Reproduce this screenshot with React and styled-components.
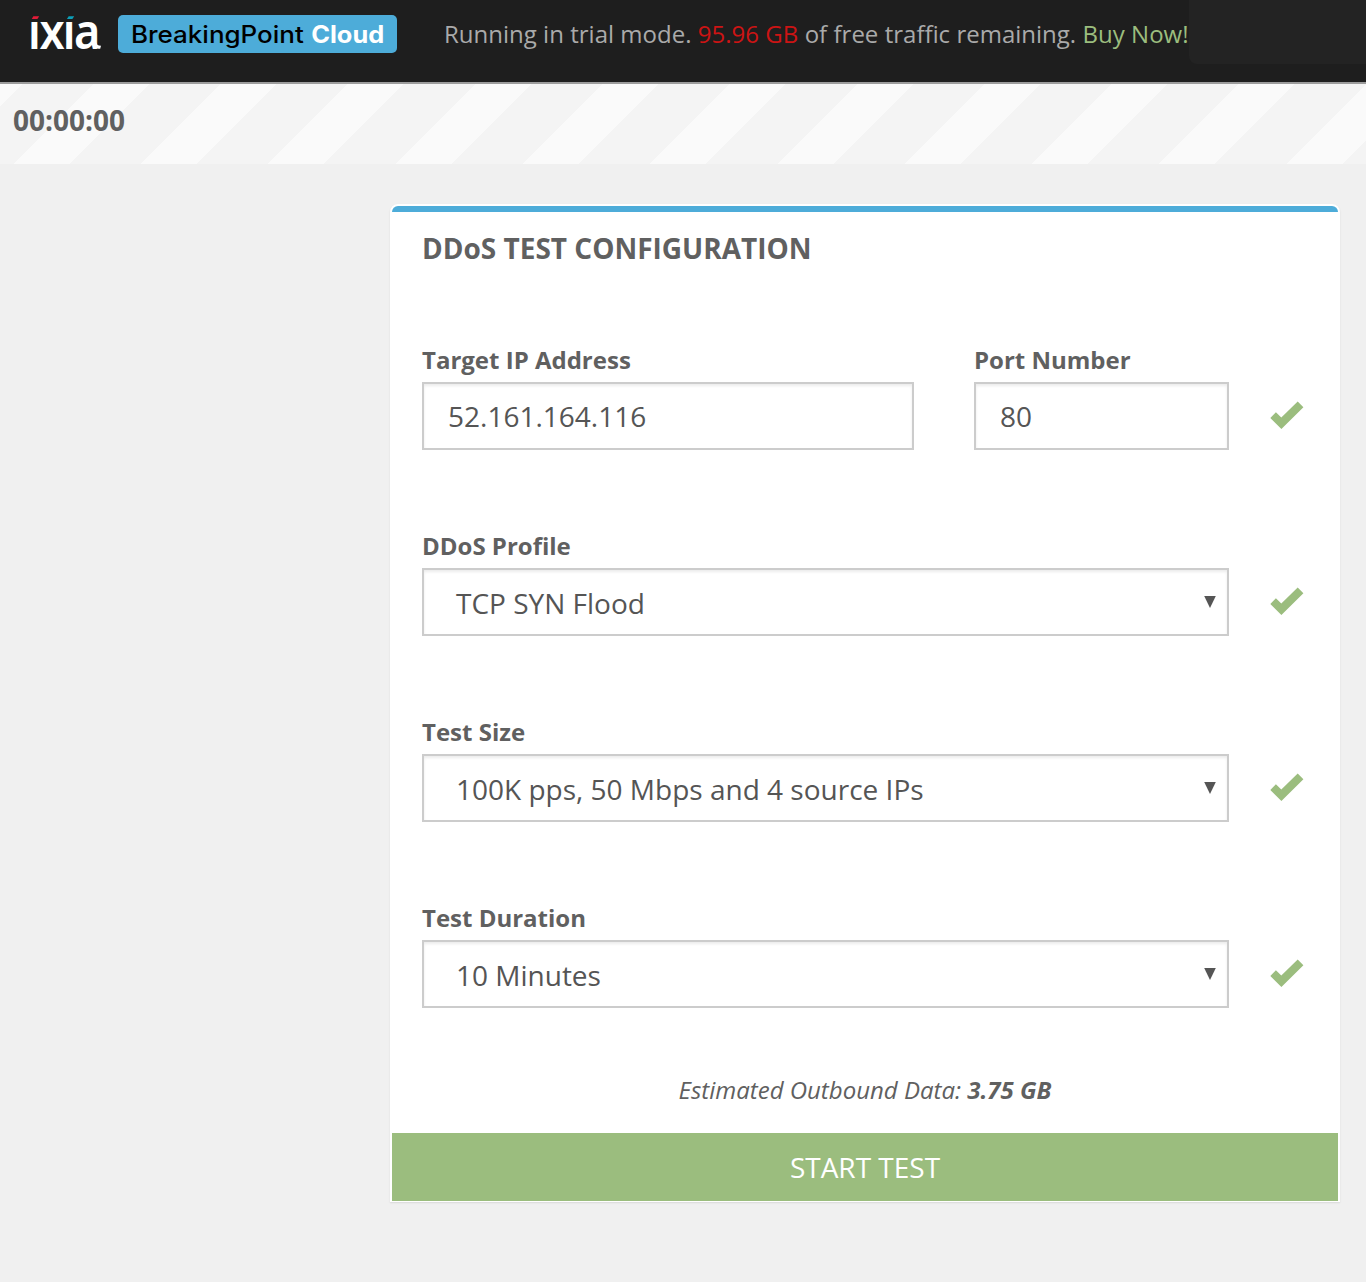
import React from 'react';
import styled, { createGlobalStyle } from 'styled-components';

const GlobalStyle = createGlobalStyle`
  *, *::before, *::after { box-sizing: border-box; }
  body {
    margin: 0;
    background: #f0f0f0;
    color: #606060;
    font-family: "Open Sans", "Noto Sans", sans-serif;
    font-size: 24px;
  }
`;

const Page = styled.div`
  min-height: 1282px;
  display: flex;
  flex-direction: column;
`;

const Header = styled.header`
  height: 84px;
  display: flex;
  align-items: flex-start;
  background: #1e1e1e;
  border-bottom: 2px solid #9c9c9c;
`;

const Brand = styled.div`
  display: flex;
  gap: 16px;
  padding: 15px 0 0 30px;
`;

const LogoSvg = styled.svg`
  display: block;
  width: 72px;
  height: 38px;
  overflow: visible;
`;

const Badge = styled.svg`
  display: block;
  width: 279px;
  height: 38px;
  background: #4dacd9;
  border-radius: 5px;
`;

const TrialNotice = styled.p`
  margin: 0 0 0 47px;
  line-height: 68px;
  color: #aaa;
  white-space: nowrap;
  word-spacing: 0.1px;
`;

const Quota = styled.span`
  color: #cc1414;
`;

const BuyLink = styled.a`
  color: #9bbd7e;
  text-decoration: none;
`;

const AccountArea = styled.div`
  flex: 1 0 177px;
  margin-left: auto;
  max-width: 177px;
  height: 64px;
  background: #232323;
  border-bottom-left-radius: 8px;
`;

const TimerBar = styled.div`
  height: 80px;
  padding-left: 13px;
  font-size: 28px;
  font-weight: 700;
  line-height: 72px;
  background: repeating-linear-gradient(
    135deg,
    #fafafa 0 15.6px,
    #f4f4f4 15.6px 66px,
    #fafafa 66px 90px
  );
`;

const Main = styled.main`
  display: flex;
  justify-content: flex-end;
  padding: 40px 26px 0 0;
`;

const Card = styled.section`
  width: 950px;
  border: 2px solid #fff;
  border-bottom-width: 1px;
  border-radius: 8px 8px 0 0;
  background: #fff;
  box-shadow: 0 1px 2px rgba(0, 0, 0, 0.1);
`;

const Accent = styled.div`
  height: 6px;
  background: #4dacd9;
  border-radius: 6px 6px 0 0;
`;

const Title = styled.h1`
  margin: 0 30px 54px;
  font-size: 28px;
  font-weight: 700;
  line-height: 72px;
`;

const Form = styled.div`
  display: flex;
  flex-direction: column;
  gap: 74px;
  padding: 0 30px;
`;

const FormRow = styled.div`
  display: grid;
  grid-template-columns: ${(p) => (p.$split ? '492px 255px' : '807px')} 34px;
  column-gap: ${(p) => (p.$split ? '60px' : '41px')};
  align-items: end;
`;

const Field = styled.label`
  display: block;
`;

const Label = styled.span`
  display: block;
  font-weight: 700;
  line-height: 44px;
`;

const Control = styled.span`
  display: flex;
  align-items: center;
  justify-content: space-between;
  height: 68px;
  padding: ${(p) => (p.$select ? '2px 11px 0 32px' : '0 24px')};
  border: 2px solid #ccc;
  background: #fff;
  box-shadow: inset 0 2px 3px rgba(0, 0, 0, 0.08);
  color: #555;
  font-size: 28px;
`;

const Arrow = styled.svg`
  display: block;
  width: 12px;
  height: 12px;
  margin-top: -2px;
`;

const CheckSvg = styled.svg`
  display: block;
  width: 34px;
  height: 28px;
  margin: 0 0 21px ${(p) => (p.$tight ? '-19px' : '0')};
`;

const Estimate = styled.p`
  margin: 57px 0 18px;
  line-height: 50px;
  font-style: italic;
  text-align: center;
`;

const StartButton = styled.button`
  display: block;
  width: 100%;
  height: 68px;
  padding: 0;
  border: 0;
  background: #9bbd7e;
  color: #fff;
  font-family: inherit;
  font-size: 28px;
`;

const IxiaLogo = () => (
  <LogoSvg viewBox="0 0 72 38" role="img">
    <text
      transform="scale(0.92 1)"
      x="-2.3 10.3 35.5 47.9"
      y="33.6"
      fill="#fff"
      fontFamily='"Noto Sans", "Open Sans", sans-serif'
      fontSize="49"
      fontWeight="600"
    >
      ixia
    </text>
    <path d="M0 -6H9V7H0zM35 -6H45V7H35z" fill="#1e1e1e" />
    <path d="M66.5 27.5C66.7 29.8 68 30.8 71 30.8L70.2 33.7C67 34.2 65 33.2 64 30.5z" fill="#fff" />
    <path d="M1.7 4.1 3.4 1.3H9.2L7.4 4.1z" fill="#e31b38" />
    <path d="M36.9 4.1 38.7 1.3H44.2L42.4 4.1z" fill="#0c9fb8" />
  </LogoSvg>
);

const ProductBadge = () => (
  <Badge viewBox="0 0 279 38" fontFamily="Inter, sans-serif" fontSize="24">
    <text x="13" y="27.8" fontWeight="500" fill="#000" textLength="172.8" lengthAdjust="spacingAndGlyphs">
      BreakingPoint
    </text>
    <text x="193.2" y="27.8" fontWeight="700" fill="#fff" textLength="73" lengthAdjust="spacingAndGlyphs">
      Cloud
    </text>
  </Badge>
);

const Check = ({ tight }) => (
  <CheckSvg viewBox="0 0 34 28" $tight={tight}>
    <path d="M0.3 16.9 5.9 11.3 11.3 16.4 27.7 0.6 33.4 6.3 11.4 28z" fill="#9bbd7e" />
  </CheckSvg>
);

const SelectRow = ({ label, value }) => (
  <FormRow>
    <Field>
      <Label>{label}</Label>
      <Control $select>
        {value}
        <Arrow viewBox="0 0 12 12">
          <path d="M0.2 0H11.8L6 12z" fill="#555" />
        </Arrow>
      </Control>
    </Field>
    <Check />
  </FormRow>
);

const selects = [
  { label: 'DDoS Profile', value: 'TCP SYN Flood' },
  { label: 'Test Size', value: '100K pps, 50 Mbps and 4 source IPs' },
  { label: 'Test Duration', value: '10 Minutes' },
];

export default function App() {
  return (
    <Page>
      <GlobalStyle />
      <Header>
        <Brand>
          <IxiaLogo />
          <ProductBadge />
        </Brand>
        <TrialNotice>
          Running in trial mode. <Quota>95.96 GB</Quota> of free traffic remaining.{' '}
          <BuyLink>Buy Now!</BuyLink>
        </TrialNotice>
        <AccountArea />
      </Header>
      <TimerBar>00:00:00</TimerBar>
      <Main>
        <Card>
          <Accent />
          <Title>DDoS TEST CONFIGURATION</Title>
          <Form>
            <FormRow $split>
              <Field>
                <Label>Target IP Address</Label>
                <Control>52.161.164.116</Control>
              </Field>
              <Field>
                <Label>Port Number</Label>
                <Control>80</Control>
              </Field>
              <Check tight />
            </FormRow>
            {selects.map((item) => (
              <SelectRow key={item.label} {...item} />
            ))}
          </Form>
          <Estimate>
            Estimated Outbound Data: <b>3.75 GB</b>
          </Estimate>
          <StartButton>START TEST</StartButton>
        </Card>
      </Main>
    </Page>
  );
}
